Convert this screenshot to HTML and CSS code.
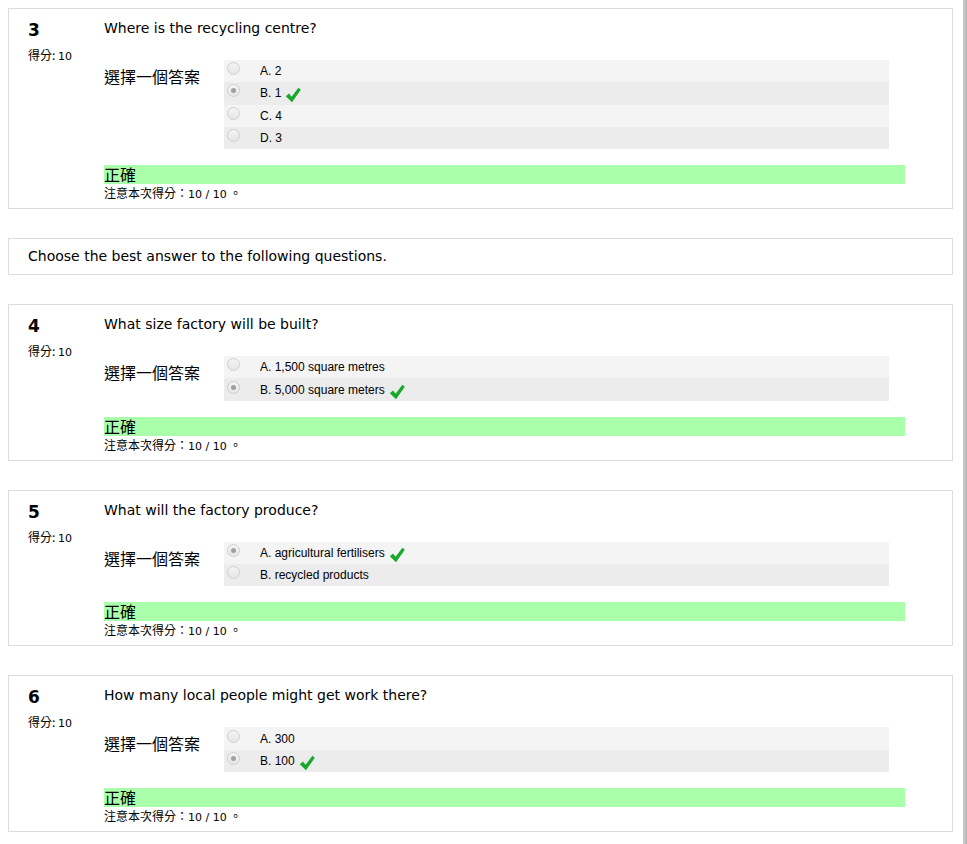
FILE: index.html
```html
<!DOCTYPE html>
<html>
<head>
<meta charset="utf-8">
<link rel="stylesheet" href="styles.css">
</head>
<body>
<div class="page">

  <div class="que">
    <div class="info">
      <div class="no">3</div>
      <div class="grade">得分: <span class="num">10</span></div>
    </div>
    <div class="content">
      <div class="qtext">Where is the recycling centre?</div>
      <div class="ablock">
        <div class="prompt">選擇一個答案</div>
        <div class="answer">
          <div class="r0"><span class="radio"></span><span class="lbl">A. 2</span></div>
          <div class="r1"><span class="radio checked"></span><span class="lbl">B. 1</span><svg class="tick" viewBox="0 0 16 16"><path d="M0.8 9.2 L4 6.6 L6.6 9.8 L13.4 0.8 L15.8 2.8 L7 15.2 Z"/></svg></div>
          <div class="r0"><span class="radio"></span><span class="lbl">C. 4</span></div>
          <div class="r1"><span class="radio"></span><span class="lbl">D. 3</span></div>
        </div>
      </div>
      <div class="feedback">正確</div>
      <div class="note">注意本次得分：<span class="num">10 / 10</span> 。</div>
    </div>
  </div>

  <div class="desc">Choose the best answer to the following questions.</div>

  <div class="que">
    <div class="info">
      <div class="no">4</div>
      <div class="grade">得分: <span class="num">10</span></div>
    </div>
    <div class="content">
      <div class="qtext">What size factory will be built?</div>
      <div class="ablock">
        <div class="prompt">選擇一個答案</div>
        <div class="answer">
          <div class="r0"><span class="radio"></span><span class="lbl">A. 1,500 square metres</span></div>
          <div class="r1"><span class="radio checked"></span><span class="lbl">B. 5,000 square meters</span><svg class="tick" viewBox="0 0 16 16"><path d="M0.8 9.2 L4 6.6 L6.6 9.8 L13.4 0.8 L15.8 2.8 L7 15.2 Z"/></svg></div>
        </div>
      </div>
      <div class="feedback">正確</div>
      <div class="note">注意本次得分：<span class="num">10 / 10</span> 。</div>
    </div>
  </div>

  <div class="que">
    <div class="info">
      <div class="no">5</div>
      <div class="grade">得分: <span class="num">10</span></div>
    </div>
    <div class="content">
      <div class="qtext">What will the factory produce?</div>
      <div class="ablock">
        <div class="prompt">選擇一個答案</div>
        <div class="answer">
          <div class="r0"><span class="radio checked"></span><span class="lbl">A. agricultural fertilisers</span><svg class="tick" viewBox="0 0 16 16"><path d="M0.8 9.2 L4 6.6 L6.6 9.8 L13.4 0.8 L15.8 2.8 L7 15.2 Z"/></svg></div>
          <div class="r1"><span class="radio"></span><span class="lbl">B. recycled products</span></div>
        </div>
      </div>
      <div class="feedback">正確</div>
      <div class="note">注意本次得分：<span class="num">10 / 10</span> 。</div>
    </div>
  </div>

  <div class="que">
    <div class="info">
      <div class="no">6</div>
      <div class="grade">得分: <span class="num">10</span></div>
    </div>
    <div class="content">
      <div class="qtext">How many local people might get work there?</div>
      <div class="ablock">
        <div class="prompt">選擇一個答案</div>
        <div class="answer">
          <div class="r0"><span class="radio"></span><span class="lbl">A. 300</span></div>
          <div class="r1"><span class="radio checked"></span><span class="lbl">B. 100</span><svg class="tick" viewBox="0 0 16 16"><path d="M0.8 9.2 L4 6.6 L6.6 9.8 L13.4 0.8 L15.8 2.8 L7 15.2 Z"/></svg></div>
        </div>
      </div>
      <div class="feedback">正確</div>
      <div class="note">注意本次得分：<span class="num">10 / 10</span> 。</div>
    </div>
  </div>

</div>
<div class="scrollbar"></div>
</body>
</html>
```

FILE: styles.css
```css
html, body {
  margin: 0;
  padding: 0;
  background: #fff;
}
body {
  padding: 8px;
  font-family: "DejaVu Sans", "Noto Sans CJK TC", sans-serif;
  color: #000;
}
.page {
  width: 945px;
}
.que {
  display: flex;
  border: 1px solid #dcdcdc;
  margin-bottom: 29px;
  padding-bottom: 5px;
}
.info {
  width: 76px;
  padding-left: 19px;
  padding-top: 11px;
  flex: none;
}
.no {
  font-family: "DejaVu Sans", sans-serif;
  font-weight: bold;
  font-size: 17px;
  line-height: 20px;
}
.grade {
  font-family: "Noto Sans CJK TC", sans-serif;
  font-size: 12px;
  line-height: 16px;
  margin-top: 7px;
}
.num {
  font-family: "DejaVu Sans", sans-serif;
  font-size: 11px;
}
.content {
  flex: 1;
  padding-top: 9px;
}
.qtext {
  font-size: 14px;
  line-height: 20px;
  height: 20px;
}
.ablock {
  display: flex;
  margin-top: 22px;
}
.prompt {
  width: 120px;
  flex: none;
  font-family: "Noto Sans CJK TC", sans-serif;
  font-size: 16px;
  line-height: 20px;
  padding-top: 6px;
}
.answer {
  width: 665px;
}
.answer > div {
  display: flex;
  align-items: center;
  height: 22.3px;
  font-family: "Liberation Sans", Arial, sans-serif;
  font-size: 12px;
}
.r0 { background: #f4f4f4; }
.r1 { background: #ececec; }
.radio {
  width: 11px;
  height: 11px;
  border-radius: 50%;
  border: 1px solid #cfcfcf;
  background: linear-gradient(#f4f4f4, #e6e6e6);
  margin-left: 3px;
  margin-top: -5px;
  box-sizing: content-box;
  position: relative;
  flex: none;
}
.radio.checked::after {
  content: "";
  position: absolute;
  left: 3px;
  top: 3px;
  width: 5px;
  height: 5px;
  border-radius: 50%;
  background: #a0a0a0;
}
.lbl {
  margin-left: 20px;
}
.tick {
  width: 16px;
  height: 16px;
  margin-left: 4px;
  margin-top: 4px;
  fill: #18a82a;
}
.feedback {
  width: 801px;
  background: #aaffaa;
  font-family: "Noto Sans CJK TC", sans-serif;
  font-size: 16px;
  line-height: 19px;
  height: 19px;
  margin-top: 16px;
}
.note {
  font-family: "Noto Sans CJK TC", sans-serif;
  font-size: 12px;
  line-height: 17px;
}
.desc {
  border: 1px solid #dcdcdc;
  height: 37px;
  box-sizing: border-box;
  padding-left: 19px;
  font-size: 14px;
  line-height: 35px;
  margin-bottom: 29px;
}
.scrollbar {
  position: fixed;
  top: 0;
  right: 0;
  width: 4px;
  height: 100%;
  background: linear-gradient(to right, #cfcfcf, #b4b4b4);
}
```
